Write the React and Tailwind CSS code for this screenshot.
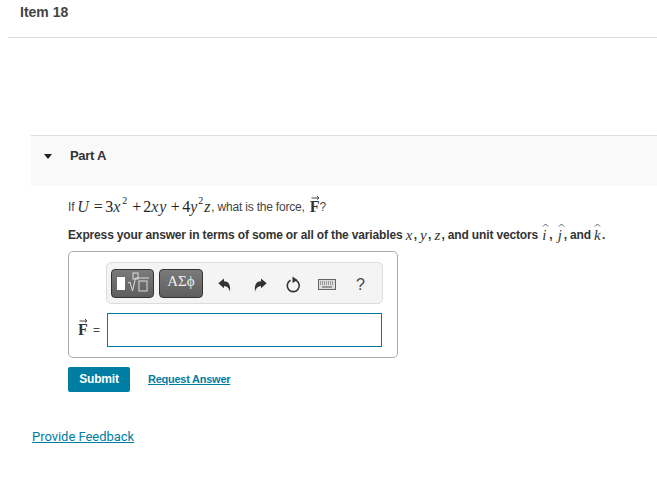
import React from "react";

const Math = ({ children, className = "" }) => (
  <span className={`inline-block font-['Liberation_Serif',serif] italic text-[#333] ${className}`}>{children}</span>
);

const Num = ({ children, className = "" }) => (
  <span className={`inline-block font-['Liberation_Serif',serif] text-[#222] ${className}`}>{children}</span>
);

const Sup = ({ className = "" }) => (
  <span className={`inline-block font-['Liberation_Serif',serif] text-[10px] leading-none text-[#222] relative -top-[6px] ${className}`}>2</span>
);

const VecF = ({ className = "" }) => (
  <span className={`relative inline-block font-['Liberation_Serif',serif] font-bold text-[16px] leading-none text-[#333] ${className}`}>
    F
    <svg className="absolute left-[1px] top-[-4px]" width="9" height="5" viewBox="0 0 9 5">
      <path d="M0.5 3h7M6 1l2 2-2 1.5" fill="none" stroke="#333" strokeWidth="0.9" />
    </svg>
  </span>
);

const Hat = ({ children, className = "" }) => (
  <span className={`relative inline-block font-['Liberation_Serif',serif] italic font-normal text-[#333] text-[15px] leading-none ${className}`}>
    {children}
    <svg className="absolute left-[0px] top-[-5px]" width="7" height="4" viewBox="0 0 7 4">
      <path d="M1 3.5L3.5 1 6 3.5" fill="none" stroke="#333" strokeWidth="0.8" />
    </svg>
  </span>
);

const Undo = ({ flip }) => (
  <svg width="13" height="14" viewBox="0 0 13 14" className={flip ? "-scale-x-100" : ""}>
    <path d="M0.3 5.2 L6 0.5 V3.2 C10 3.2 12.8 6 12 13.5 C11 10 9.2 8.2 6 8 V10.2 Z" fill="#333" />
  </svg>
);

const Toolbar = () => (
  <div className="flex items-center w-[277px] h-[42px] bg-[#f4f4f4] border border-[#dddddd] rounded-[5px] pl-[4px]">
    <button className="flex items-center w-[43px] h-[29px] rounded-[4px] border border-[#333] bg-gradient-to-b from-[#7b7b7b] to-[#5e5e5e] pl-[5px]">
      <span className="w-[8px] h-[13px] bg-white" />
      <svg width="24" height="22" viewBox="0 0 24 22" className="ml-[1px]">
        <rect x="7" y="1" width="5" height="6" fill="none" stroke="#ddd" strokeWidth="1" />
        <path d="M2 11l2-1 2.5 9 3-13H23" fill="none" stroke="#ddd" strokeWidth="1" />
        <rect x="13" y="9" width="8" height="10" fill="none" stroke="#ddd" strokeWidth="1" />
      </svg>
    </button>
    <button className="ml-[5px] w-[44px] h-[29px] rounded-[4px] border border-[#333] bg-gradient-to-b from-[#7b7b7b] to-[#5e5e5e] text-[#eee] text-[15px] leading-none font-['Liberation_Serif',serif] pb-[4px]">
      ΑΣϕ
    </button>
    <div className="ml-[15px] mt-[3px] flex items-center">
      <Undo />
      <span className="ml-[23px] flex"><Undo flip /></span>
      <svg width="16" height="18" viewBox="0 0 16 18" className="ml-[18px]">
        <path d="M5.5 4.3 A6 6 0 1 0 11 4.3" fill="none" stroke="#333" strokeWidth="1.6" />
        <path d="M7.5 0.5 L12.5 4 L7.5 7 Z" fill="#333" />
      </svg>
      <svg width="18" height="11" viewBox="0 0 18 11" className="ml-[17px]">
        <rect x="0.5" y="0.5" width="17" height="10" fill="#ddd" stroke="#666" />
        <path d="M2 3h14M2 5h14" stroke="#555" strokeDasharray="1 1" />
        <path d="M4 8h10" stroke="#555" />
      </svg>
      <span className="ml-[20px] text-[16px] leading-none text-[#444] font-['Liberation_Sans',sans-serif]">?</span>
    </div>
  </div>
);

export default function App() {
  return (
    <div className="w-[657px] h-[487px] bg-white overflow-hidden font-['Liberation_Sans',Arial,sans-serif] text-[#333]">
      <div className="ml-[8px] h-[38px] border-b border-[#dddddd] pl-[12px] pt-[4px]">
        <h1 className="text-[14px] leading-[16px] font-bold text-[#444]">Item 18</h1>
      </div>

      <div className="ml-[31px] mt-[97px] h-[51px] border-t border-[#dddddd] bg-[#f9f9f9] flex items-start pt-[12px]">
        <span className="ml-[13px] mt-[6px] w-0 h-0 border-x-[4.5px] border-x-transparent border-t-[5px] border-t-[#222]" />
        <span className="ml-[18px] text-[13px] leading-[16px] font-bold text-[#333] tracking-[-0.3px]">Part A</span>
      </div>

      <div className="ml-[68px]">
        <p className="mt-[11px] h-[20px] flex items-center text-[12px] tracking-[-0.2px] text-[#444] whitespace-pre">
          If
          <span className="text-[16px] ml-[3px] flex items-center tracking-normal">
            <Math className="w-[14px]">U</Math>
            <Num className="w-[14px] text-center">=</Num>
            <Num className="w-[8px]">3</Num>
            <Math className="w-[9px]">x</Math>
            <Sup className="w-[8px]" />
            <Num className="w-[13px] text-center">+</Num>
            <Num className="w-[8px]">2</Num>
            <Math className="w-[8px]">x</Math>
            <Math className="w-[9px]">y</Math>
            <Num className="w-[14px] text-center">+</Num>
            <Num className="w-[8px]">4</Num>
            <Math className="w-[8px]">y</Math>
            <Sup className="w-[6px]" />
            <Math className="w-[7px]">z</Math>
          </span>
          , what is the force, <VecF className="ml-[2px]" />?
        </p>

        <p className="mt-[9px] h-[18px] flex items-center text-[12px] font-bold tracking-[-0.15px] text-[#333] whitespace-pre">
          Express your answer in terms of some or all of the variables{" "}
          <Math className="font-normal text-[15px] tracking-normal w-[8px]">x</Math>,{" "}
          <Math className="font-normal text-[15px] tracking-normal w-[8px]">y</Math>,{" "}
          <Math className="font-normal text-[15px] tracking-normal w-[7px]">z</Math>, and unit vectors{" "}
          <Hat className="w-[7px] ml-[1px]">i</Hat>,{" "}
          <Hat className="w-[6px] ml-[2px]">j</Hat>, and{" "}
          <Hat className="w-[8px]">k</Hat>.
        </p>

        <div className="mt-[7px] w-[330px] h-[107px] border border-[#aaaaaa] rounded-[5px] pt-[10px] pl-[37px]">
          <Toolbar />
          <div className="mt-[9px] ml-[-28px] flex items-center">
            <VecF className="w-[11px]" />
            <span className="ml-[4px] w-[14px] text-[12px] text-[#444]">=</span>
            <div className="w-[275px] h-[34px] border border-[#007b9e] bg-white" />
          </div>
        </div>

        <div className="mt-[9px] flex items-center">
          <button className="w-[62px] h-[25px] rounded-[2px] bg-[#007da3] text-white text-[12px] font-bold tracking-[-0.2px] pb-[2px]">
            Submit
          </button>
          <a className="ml-[18px] text-[#007da3] text-[11px] font-bold underline tracking-[-0.25px]">Request Answer</a>
        </div>
      </div>

      <a className="block ml-[32px] mt-[37px] text-[13px] leading-[16px] text-[#007da3] underline tracking-[-0.03px] font-['Roboto',sans-serif]">
        Provide Feedback
      </a>
    </div>
  );
}
